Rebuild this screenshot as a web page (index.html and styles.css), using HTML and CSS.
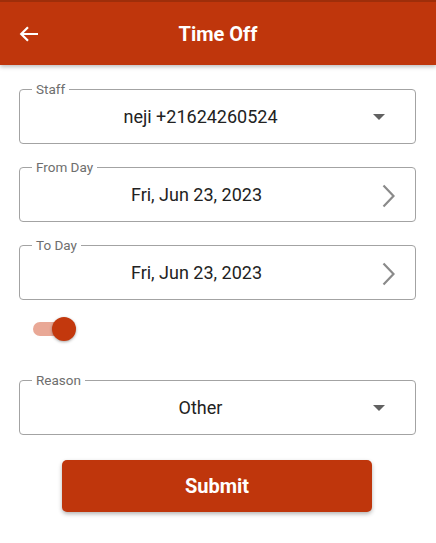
FILE: index.html
```html
<!DOCTYPE html>
<html>
<head>
<meta charset="utf-8">
<link rel="stylesheet" href="styles.css">
</head>
<body>
<header class="appbar">
  <div class="back">
    <svg width="20" height="16" viewBox="0 0 20 16"><path d="M19 8H2.5M9 1.2L2.2 8L9 14.8" fill="none" stroke="#fff" stroke-width="2.2"/></svg>
  </div>
  <h1 class="title">Time Off</h1>
  <div></div>
</header>
<main class="form">
  <div class="field">
    <span class="label">Staff</span>
    <span class="value">neji +21624260524</span>
    <span class="icon drop"><svg width="12" height="6" viewBox="0 0 12 6"><path d="M0 0h12L6 6z" fill="#616161"/></svg></span>
  </div>
  <div class="field">
    <span class="label">From Day</span>
    <span class="value date">Fri, Jun 23, 2023</span>
    <span class="icon chev"><svg width="13" height="24" viewBox="0 0 13 24"><path d="M1.5 1.5L11.5 12L1.5 22.5" fill="none" stroke="#8a8a8a" stroke-width="2.2"/></svg></span>
  </div>
  <div class="field">
    <span class="label">To Day</span>
    <span class="value date">Fri, Jun 23, 2023</span>
    <span class="icon chev"><svg width="13" height="24" viewBox="0 0 13 24"><path d="M1.5 1.5L11.5 12L1.5 22.5" fill="none" stroke="#8a8a8a" stroke-width="2.2"/></svg></span>
  </div>
  <div class="switch-row">
    <div class="switch">
      <span class="track"></span>
      <span class="thumb"></span>
    </div>
  </div>
  <div class="field">
    <span class="label">Reason</span>
    <span class="value">Other</span>
    <span class="icon drop"><svg width="12" height="6" viewBox="0 0 12 6"><path d="M0 0h12L6 6z" fill="#616161"/></svg></span>
  </div>
  <div class="actions">
    <button class="submit">Submit</button>
  </div>
</main>
</body>
</html>
```
FILE: styles.css
```css
* { box-sizing: border-box; }
body {
  margin: 0;
  background: #fff;
  font-family: Roboto, "Noto Sans", Arial, sans-serif;
  width: 436px;
  height: 543px;
  overflow: hidden;
}
.appbar {
  height: 65px;
  background: #bf360c;
  border-top: 2px solid #9e2e0a;
  display: grid;
  grid-template-columns: 60px 1fr 60px;
  align-items: center;
  box-shadow: 0 2px 4px rgba(0,0,0,0.25);
  position: relative;
}
.back {
  padding-left: 19px;
  display: flex;
  align-items: center;
  height: 16px;
}
.back svg { display: block; }
.title {
  margin: 0;
  text-align: center;
  color: #fff;
  font-size: 20px;
  font-weight: 700;
}
.form {
  padding: 24px 20px 0 19px;
  display: flex;
  flex-direction: column;
}
.field {
  position: relative;
  height: 55px;
  border: 1px solid #a3a3a3;
  border-radius: 4px;
  display: flex;
  align-items: center;
  padding: 0 12px;
  margin-bottom: 23px;
}
.label {
  position: absolute;
  left: 12px;
  top: -9px;
  padding: 0 4px;
  background: #fff;
  color: #6e6e6e;
  font-size: 13.5px;
  line-height: 16px;
}
.value {
  flex: 1;
  text-align: center;
  font-size: 18px;
  color: #222;
}
.icon { display: flex; align-items: center; }
.icon svg { display: block; }
.drop { margin: 0 18px 0 4px; }
.chev { margin: 3px 8px 0 21px; }
.switch-row {
  height: 26px;
  margin: -7px 0 38px;
  display: flex;
  align-items: center;
}
.switch {
  position: relative;
  width: 58px;
  height: 26px;
  margin-left: 14px;
}
.track {
  position: absolute;
  left: 0;
  top: 6px;
  width: 36px;
  height: 14px;
  border-radius: 7px;
  background: #e9a896;
}
.thumb {
  position: absolute;
  left: 19px;
  top: 1px;
  width: 24px;
  height: 24px;
  border-radius: 50%;
  background: #c3380d;
  box-shadow: 0 1px 3px rgba(0,0,0,0.35);
}
.actions {
  display: flex;
  justify-content: center;
  padding-top: 2px;
}
.submit {
  width: 310px;
  height: 52px;
  margin-left: -1px;
  border: none;
  border-radius: 5px;
  background: #bf360c;
  color: #fff;
  font-family: Roboto, Arial, sans-serif;
  font-size: 20px;
  font-weight: 700;
  box-shadow: 0 2px 4px rgba(0,0,0,0.3);
}
```
